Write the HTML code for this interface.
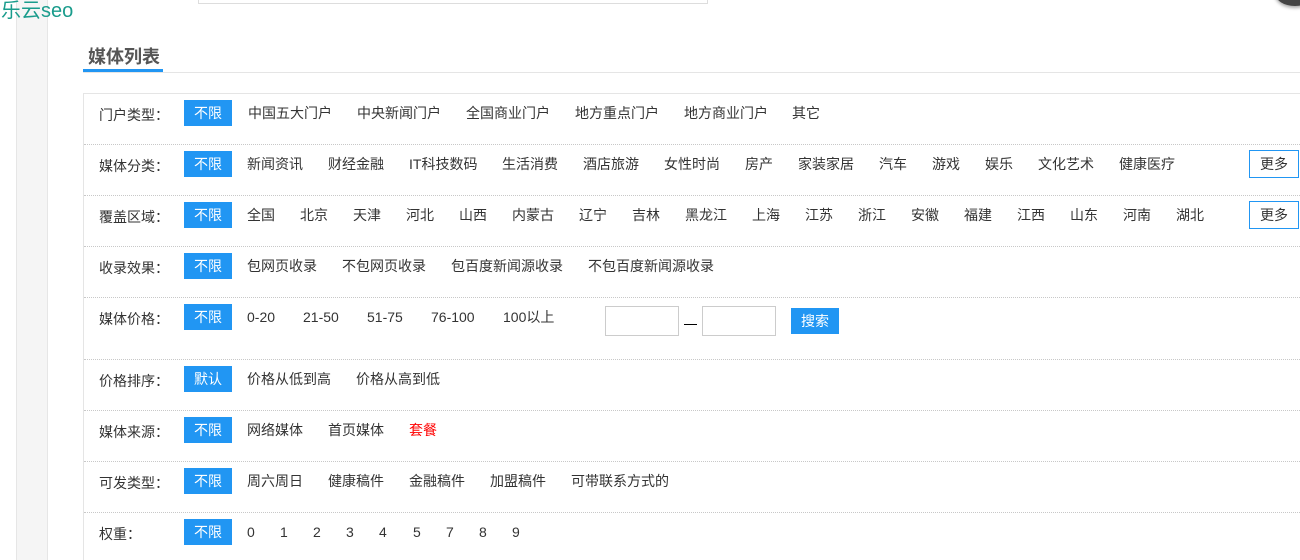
<!DOCTYPE html>
<html><head><meta charset="utf-8"><style>
*{margin:0;padding:0;box-sizing:border-box}
html,body{width:1300px;height:560px;overflow:hidden}
body{background:#fff;font-family:"Liberation Sans","Noto Sans CJK SC",sans-serif;font-size:14px;color:#333;position:relative}
.a{position:absolute;white-space:nowrap;line-height:16px}
.b{position:absolute;background:#2196f3;color:#fff;width:48px;height:26px;line-height:26px;text-align:center;font-size:14px}
.sep{position:absolute;left:84px;width:1216px;border-top:1px dotted #c8c8c8;height:0}
.more{position:absolute;left:1249px;width:50px;height:28px;border:1px solid #2196f3;text-align:center;line-height:26px;color:#333}
.in{position:absolute;width:74px;height:30px;border:1px solid #ccc;top:306px}
</style></head><body>
<div style="position:absolute;left:16px;top:0;width:32px;height:560px;background:#f5f5f5;border-left:1px solid #e6e6e6;border-right:1px solid #e6e6e6"></div>
<div class="a" style="left:1px;top:-1px;font-size:20px;line-height:24px;color:#1a9c8c">乐云seo</div>
<div style="position:absolute;left:198px;top:-2px;width:510px;height:6px;border:1px solid #ddd"></div>
<div style="position:absolute;left:1275px;top:-20px;width:40px;height:26px;border-radius:50%;background:#444;box-shadow:0 2px 3px #aaa"></div>
<div class="a" style="left:88px;top:46px;font-size:18px;line-height:22px;font-weight:bold;color:#555">媒体列表</div>
<div style="position:absolute;left:83px;top:72px;width:1217px;border-top:1px solid #e5e5e5"></div>
<div style="position:absolute;left:83px;top:69px;width:80px;height:3px;background:#2196f3"></div>
<div style="position:absolute;left:83px;top:93px;width:1230px;height:470px;border:1px solid #e5e5e5"></div>
<div class="sep" style="top:144px"></div><div class="sep" style="top:195px"></div><div class="sep" style="top:246px"></div><div class="sep" style="top:297px"></div><div class="sep" style="top:359px"></div><div class="sep" style="top:410px"></div><div class="sep" style="top:461px"></div><div class="sep" style="top:512px"></div>

<div class="a" style="left:99px;top:107px">门户类型：</div><div class="b" style="left:184px;top:100px">不限</div>
<div class="a" style="left:248px;top:105px">中国五大门户</div><div class="a" style="left:357px;top:105px">中央新闻门户</div><div class="a" style="left:466px;top:105px">全国商业门户</div><div class="a" style="left:575px;top:105px">地方重点门户</div><div class="a" style="left:684px;top:105px">地方商业门户</div><div class="a" style="left:792px;top:105px">其它</div>

<div class="a" style="left:99px;top:158px">媒体分类：</div><div class="b" style="left:184px;top:151px">不限</div>
<div class="a" style="left:247px;top:156px">新闻资讯</div><div class="a" style="left:328px;top:156px">财经金融</div><div class="a" style="left:409px;top:156px">IT科技数码</div><div class="a" style="left:502px;top:156px">生活消费</div><div class="a" style="left:583px;top:156px">酒店旅游</div><div class="a" style="left:664px;top:156px">女性时尚</div><div class="a" style="left:745px;top:156px">房产</div><div class="a" style="left:798px;top:156px">家装家居</div><div class="a" style="left:879px;top:156px">汽车</div><div class="a" style="left:932px;top:156px">游戏</div><div class="a" style="left:985px;top:156px">娱乐</div><div class="a" style="left:1038px;top:156px">文化艺术</div><div class="a" style="left:1119px;top:156px">健康医疗</div>
<div class="more" style="top:150px">更多</div>

<div class="a" style="left:99px;top:209px">覆盖区域：</div><div class="b" style="left:184px;top:202px">不限</div>
<div class="a" style="left:247px;top:207px">全国</div><div class="a" style="left:300px;top:207px">北京</div><div class="a" style="left:353px;top:207px">天津</div><div class="a" style="left:406px;top:207px">河北</div><div class="a" style="left:459px;top:207px">山西</div><div class="a" style="left:512px;top:207px">内蒙古</div><div class="a" style="left:579px;top:207px">辽宁</div><div class="a" style="left:632px;top:207px">吉林</div><div class="a" style="left:685px;top:207px">黑龙江</div><div class="a" style="left:752px;top:207px">上海</div><div class="a" style="left:805px;top:207px">江苏</div><div class="a" style="left:858px;top:207px">浙江</div><div class="a" style="left:911px;top:207px">安徽</div><div class="a" style="left:964px;top:207px">福建</div><div class="a" style="left:1017px;top:207px">江西</div><div class="a" style="left:1070px;top:207px">山东</div><div class="a" style="left:1123px;top:207px">河南</div><div class="a" style="left:1176px;top:207px">湖北</div>
<div class="more" style="top:201px">更多</div>

<div class="a" style="left:99px;top:260px">收录效果：</div><div class="b" style="left:184px;top:253px">不限</div>
<div class="a" style="left:247px;top:258px">包网页收录</div><div class="a" style="left:342px;top:258px">不包网页收录</div><div class="a" style="left:451px;top:258px">包百度新闻源收录</div><div class="a" style="left:588px;top:258px">不包百度新闻源收录</div>

<div class="a" style="left:99px;top:311px">媒体价格：</div><div class="b" style="left:184px;top:304px">不限</div>
<div class="a" style="left:247px;top:309px">0-20</div><div class="a" style="left:303px;top:309px">21-50</div><div class="a" style="left:367px;top:309px">51-75</div><div class="a" style="left:431px;top:309px">76-100</div><div class="a" style="left:503px;top:309px">100以上</div>
<div class="in" style="left:605px"></div><div style="position:absolute;left:684px;top:324px;width:13px;border-top:1px solid #000"></div><div class="in" style="left:702px"></div>
<div class="b" style="left:791px;top:308px">搜索</div>

<div class="a" style="left:99px;top:373px">价格排序：</div><div class="b" style="left:184px;top:366px">默认</div>
<div class="a" style="left:247px;top:371px">价格从低到高</div><div class="a" style="left:356px;top:371px">价格从高到低</div>

<div class="a" style="left:99px;top:424px">媒体来源：</div><div class="b" style="left:184px;top:417px">不限</div>
<div class="a" style="left:247px;top:422px">网络媒体</div><div class="a" style="left:328px;top:422px">首页媒体</div><div class="a" style="left:409px;top:422px;color:#f00">套餐</div>

<div class="a" style="left:99px;top:475px">可发类型：</div><div class="b" style="left:184px;top:468px">不限</div>
<div class="a" style="left:247px;top:473px">周六周日</div><div class="a" style="left:328px;top:473px">健康稿件</div><div class="a" style="left:409px;top:473px">金融稿件</div><div class="a" style="left:490px;top:473px">加盟稿件</div><div class="a" style="left:571px;top:473px">可带联系方式的</div>

<div class="a" style="left:99px;top:526px">权重：</div><div class="b" style="left:184px;top:519px">不限</div>
<div class="a" style="left:247px;top:524px">0</div><div class="a" style="left:280px;top:524px">1</div><div class="a" style="left:313px;top:524px">2</div><div class="a" style="left:346px;top:524px">3</div><div class="a" style="left:379px;top:524px">4</div><div class="a" style="left:413px;top:524px">5</div><div class="a" style="left:446px;top:524px">7</div><div class="a" style="left:479px;top:524px">8</div><div class="a" style="left:512px;top:524px">9</div>
</body></html>
